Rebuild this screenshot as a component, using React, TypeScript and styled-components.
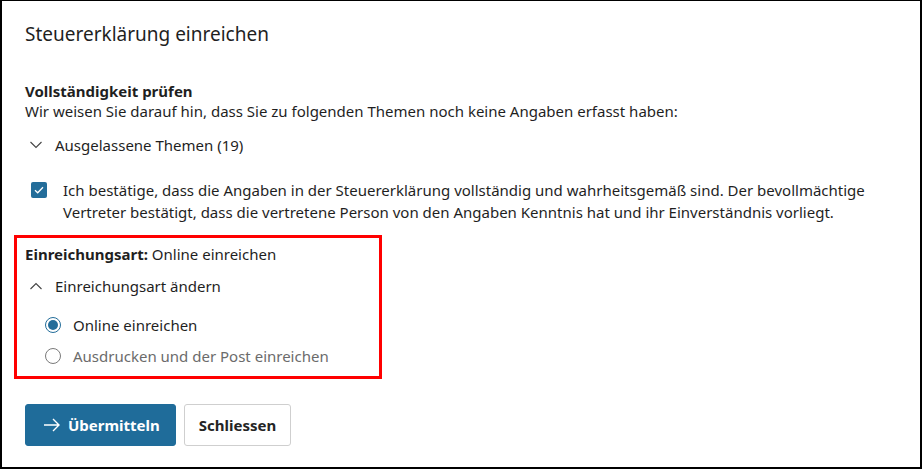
import React, {useState} from 'react';
import styled, {createGlobalStyle} from 'styled-components';

const GlobalStyle = createGlobalStyle`
  html, body {
    margin: 0;
    padding: 0;
    background: #ffffff;
  }
  body {
    font-family: "Segoe UI", "Noto Sans", "Open Sans", sans-serif;
    color: #1f1f1f;
  }
`;

const Frame = styled.div`
  box-sizing: border-box;
  width: 922px;
  height: 469px;
  border-style: solid;
  border-color: #000;
  border-width: 1px 2px 2px 2px;
  background: #fff;
  padding: 19px 23px 0 23px;
`;

const Title = styled.h1`
  margin: 0;
  font-size: 19px;
  line-height: 28px;
  font-weight: 400;
  color: #1f1f1f;
`;

const SectionHead = styled.div`
  margin-top: 33px;
  font-size: 15px;
  line-height: 20px;
  font-weight: 700;
`;

const Text = styled.p<{ $muted?: boolean }>`
  margin: 0;
  font-size: 15px;
  line-height: 20px;
  color: ${p => (p.$muted ? '#6b6b6b' : '#1f1f1f')};
`;

const Toggle = styled.button<{ $top: number }>`
  display: flex;
  align-items: center;
  gap: 13px;
  margin-top: ${p => p.$top}px;
  height: 28px;
  padding: 0 0 0 5px;
  border: none;
  background: none;
  font: inherit;
  font-size: 15px;
  color: #1f1f1f;
  cursor: pointer;
`;

const ConfirmRow = styled.label`
  display: flex;
  align-items: flex-start;
  gap: 16px;
  margin-top: 20px;
  padding-left: 6px;
  font-size: 15px;
  line-height: 22px;
`;

const Check = styled.span`
  flex: none;
  width: 16px;
  height: 16px;
  margin-top: 3px;
  border-radius: 2px;
  background: #236d9a;
  display: flex;
  align-items: center;
  justify-content: center;
`;

const Highlight = styled.div`
  box-sizing: border-box;
  width: 368px;
  margin: 12px 0 0 -11px;
  border: 3px solid #ff0000;
  padding: 6px 8px 5px 8px;
`;

const RadioList = styled.div`
  display: flex;
  flex-direction: column;
  gap: 1px;
  margin-top: 10px;
  padding-left: 20px;
`;

const RadioRow = styled.label<{ $muted?: boolean }>`
  display: flex;
  align-items: center;
  gap: 12px;
  height: 30px;
  font-size: 15px;
  color: ${p => (p.$muted ? '#6b6b6b' : '#1f1f1f')};
  cursor: pointer;
`;

const RadioDot = styled.span<{ $on?: boolean }>`
  box-sizing: border-box;
  width: 16px;
  height: 16px;
  border-radius: 50%;
  border: 1px solid ${p => (p.$on ? '#236d9a' : '#7a7a7a')};
  display: flex;
  align-items: center;
  justify-content: center;
  &::after {
    content: '';
    width: 10px;
    height: 10px;
    border-radius: 50%;
    background: ${p => (p.$on ? '#236d9a' : 'transparent')};
  }
`;

const Actions = styled.div`
  display: flex;
  gap: 8px;
  margin-top: 25px;
`;

const Btn = styled.button<{ $primary?: boolean }>`
  box-sizing: border-box;
  height: 42px;
  display: flex;
  align-items: center;
  gap: 7px;
  padding: ${p => (p.$primary ? '0 15px 0 17px' : '0 14px')};
  border-radius: 3px;
  border: 1px solid ${p => (p.$primary ? '#1f6c9a' : '#cfcfcf')};
  background: ${p => (p.$primary ? '#1f6c9a' : '#ffffff')};
  color: ${p => (p.$primary ? '#ffffff' : '#242424')};
  font: inherit;
  font-size: 15px;
  font-weight: 700;
  cursor: pointer;
`;

const Chevron = ({up}: { up?: boolean }) => (
  <svg width="12" height="8" viewBox="0 0 12 8" fill="none">
    <path d={up ? 'M0.5 7 L6 1.5 L11.5 7' : 'M0.5 1 L6 6.5 L11.5 1'} stroke="#444" strokeWidth="1.1" />
  </svg>
);

const METHODS = ['Online einreichen', 'Ausdrucken und der Post einreichen'];

export default function App() {
  const [method, setMethod] = useState(0);
  const [open, setOpen] = useState(true);

  return (
    <>
      <GlobalStyle />
      <Frame>
        <Title>Steuererklärung einreichen</Title>

        <SectionHead>Vollständigkeit prüfen</SectionHead>
        <Text>Wir weisen Sie darauf hin, dass Sie zu folgenden Themen noch keine Angaben erfasst haben:</Text>
        <Toggle $top={10}>
          <Chevron />
          Ausgelassene Themen (19)
        </Toggle>

        <ConfirmRow>
          <Check>
            <svg width="10" height="8" viewBox="0 0 10 8" fill="none">
              <path d="M1 4.2 L3.7 6.8 L9 1.2" stroke="#fff" strokeWidth="1.3" />
            </svg>
          </Check>
          <span>
            Ich bestätige, dass die Angaben in der Steuererklärung vollständig und wahrheitsgemäß sind. Der bevollmächtige
            Vertreter bestätigt, dass die vertretene Person von den Angaben Kenntnis hat und ihr Einverständnis vorliegt.
          </span>
        </ConfirmRow>

        <Highlight>
          <Text>
            <b>Einreichungsart:</b> {METHODS[method]}
          </Text>
          <Toggle $top={8} onClick={() => setOpen(!open)}>
            <Chevron up={open} />
            Einreichungsart ändern
          </Toggle>
          {open && (
            <RadioList>
              {METHODS.map((m, i) => (
                <RadioRow key={m} $muted={i !== method} onClick={() => setMethod(i)}>
                  <RadioDot $on={i === method} />
                  {m}
                </RadioRow>
              ))}
            </RadioList>
          )}
        </Highlight>

        <Actions>
          <Btn $primary>
            <svg width="18" height="14" viewBox="0 0 18 14" fill="none">
              <path d="M1 7 H16 M10 1 L16 7 L10 13" stroke="#fff" strokeWidth="1.4" />
            </svg>
            Übermitteln
          </Btn>
          <Btn>Schliessen</Btn>
        </Actions>
      </Frame>
    </>
  );
}
